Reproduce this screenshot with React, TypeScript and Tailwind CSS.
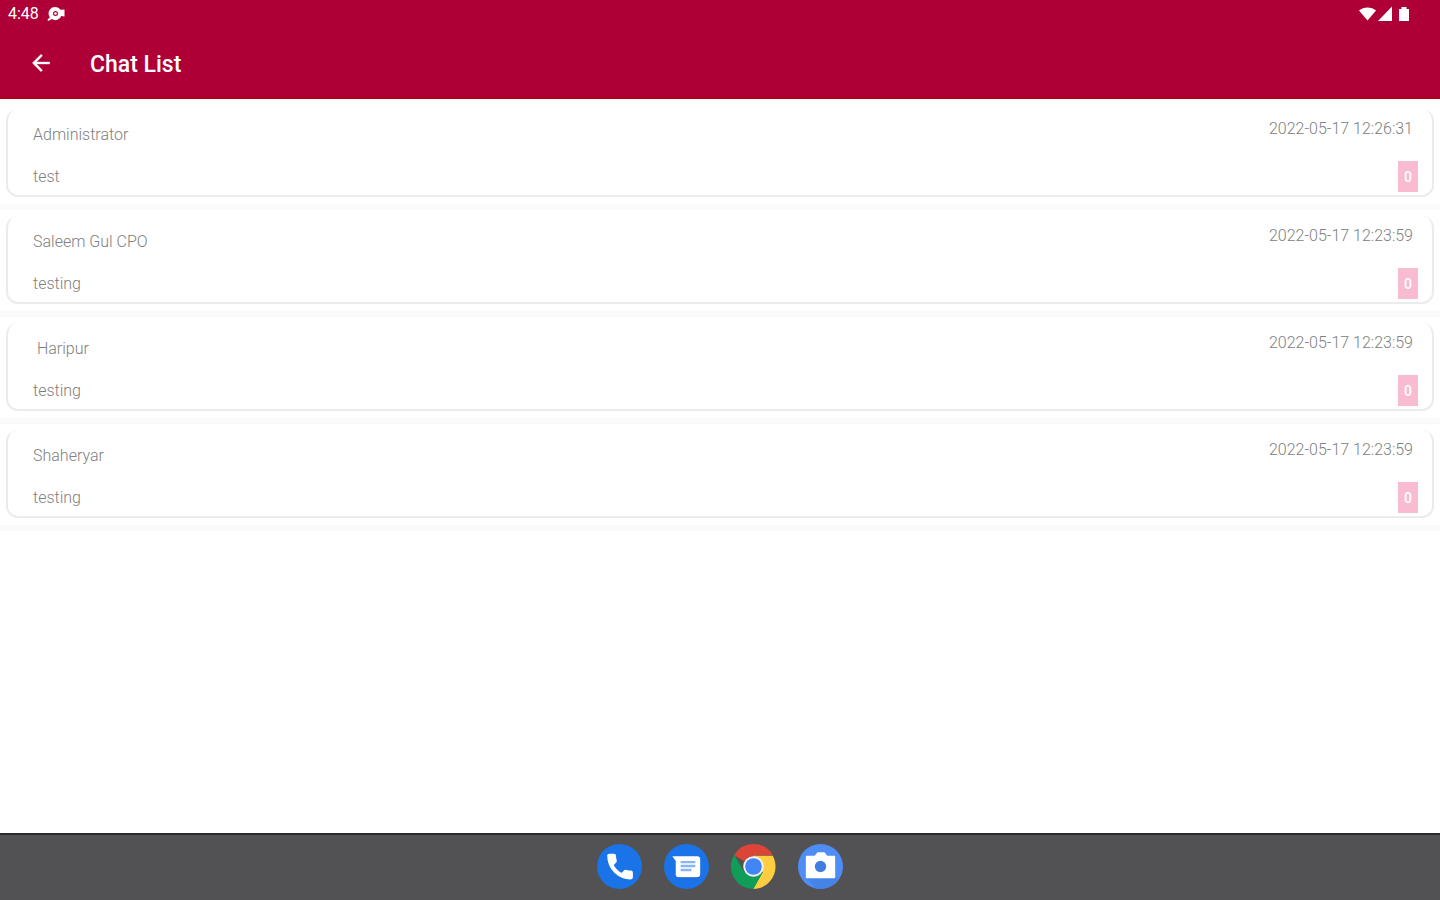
import React from 'react';

interface Chat {
  id: number;
  name: string;
  message: string;
  date: string;
  unread: number;
}

const chats: Chat[] = [
  { id: 1, name: 'Administrator', message: 'test', date: '2022-05-17 12:26:31', unread: 0 },
  { id: 2, name: 'Saleem Gul CPO', message: 'testing', date: '2022-05-17 12:23:59', unread: 0 },
  { id: 3, name: ' Haripur', message: 'testing', date: '2022-05-17 12:23:59', unread: 0 },
  { id: 4, name: 'Shaheryar', message: 'testing', date: '2022-05-17 12:23:59', unread: 0 },
];

const StatusBar: React.FC = () => (
  <div className="flex h-7 items-center justify-between pl-2 pr-7 text-white">
    <div className="flex items-center gap-2">
      <span className="text-base leading-5">4:48</span>
      <svg width="18" height="16" viewBox="0 0 18 16" fill="currentColor" aria-hidden="true">
        <path
          fillRule="evenodd"
          d="M8.500 1a6 6 0 0 1 5.100 2.800L17.500 3.500v7l-3.300-.6A6 6 0 0 1 5 13L1 15l-.5-1.500L3 11.500A6.500 6.500 0 0 1 8.500 1Zm0 4a2.500 2.500 0 1 0 0 5 2.500 2.500 0 0 0 0-5Z"
        />
        <circle cx="8.500" cy="7.500" r="1.300" />
      </svg>
    </div>
    <svg width="54" height="18" viewBox="0 0 54 18" fill="currentColor" aria-hidden="true">
      <path d="M1 5.500C5.500 1.500 13.500 1.500 18 5.500L9.500 15.500Z" />
      <path d="M34 1.500V16H20Z" />
      <path d="M41 4h2.500V2h5v2H51v12H41Z" />
    </svg>
  </div>
);

const AppBar: React.FC = () => (
  <div className="flex h-[71px] items-center gap-9 border-b-2 border-[#ab0018] pl-7 text-white">
    <button type="button" aria-label="Back" className="flex size-[26px] items-center justify-center">
      <svg width="26" height="26" viewBox="0 0 24 24" fill="currentColor" stroke="currentColor" strokeWidth="0.300">
        <path d="M20 11H7.830l5.590-5.590L12 4l-8 8 8 8 1.410-1.410L7.830 13H20v-2z" />
      </svg>
    </button>
    <h1 className="pt-1 text-[23px] leading-8 font-medium">Chat List</h1>
  </div>
);

const ChatRow: React.FC<{ chat: Chat }> = ({ chat }) => (
  <li className="border-b-6 border-[#fafafa] px-1.5 pt-1.5 pb-[7px]">
    <div className="flex h-[88px] justify-between rounded-xl border-x-2 border-b-2 border-[#ebebeb] bg-white pr-3.5 pl-[25px] text-base text-[#808080]">
      <div className="flex flex-col gap-[18px] pt-3.5 font-light whitespace-pre">
        <h2>{chat.name}</h2>
        <p>{chat.message}</p>
      </div>
      <div className="flex flex-col items-end gap-5 pt-2">
        <time className="pr-[5px] font-light">{chat.date}</time>
        <span className="flex h-[31px] w-5 items-center justify-center bg-[#f8bbd0] text-sm font-medium text-white">
          {chat.unread}
        </span>
      </div>
    </div>
  </li>
);

const PhoneIcon = () => (
  <svg width="45" height="45" viewBox="0 0 46 46" aria-hidden="true">
    <circle cx="23" cy="23" r="23" fill="#1a73e8" />
    <path
      transform="translate(7 6.500) scale(1.380)"
      fill="#fff"
      stroke="#fff"
      strokeLinejoin="round"
      d="M6.620 10.790c1.440 2.830 3.760 5.140 6.590 6.590l2.200-2.200c.27-.27.67-.36 1.020-.24 1.120.37 2.330.57 3.570.57.55 0 1 .45 1 1V20c0 .55-.45 1-1 1-9.390 0-17-7.610-17-17 0-.55.45-1 1-1h3.500c.55 0 1 .45 1 1 0 1.250.2 2.450.57 3.570.11.35.03.74-.25 1.020l-2.200 2.200z"
    />
  </svg>
);

const MessagesIcon = () => (
  <svg width="45" height="45" viewBox="0 0 46 46" aria-hidden="true">
    <circle cx="23" cy="23" r="23" fill="#1a73e8" />
    <path d="M13 31l2 4h19a3 3 0 0 0 3-3V17z" fill="#1559b7" />
    <path d="M8.500 12.500H34a3 3 0 0 1 3 3V31a3 3 0 0 1-3 3H15a3 3 0 0 1-3-3V17.500z" fill="#fff" />
    <path d="M17 18.500h15M17 22.500h15M17 26.500h11" stroke="#8ab4f8" strokeWidth="2.500" />
  </svg>
);

const ChromeIcon = () => (
  <svg width="45" height="45" viewBox="0 0 46 46" aria-hidden="true">
    <path d="M23 23L3.080 11.500A23 23 0 0 1 42.920 11.500H23z" fill="#db4437" />
    <path d="M23 12H42.700A23 23 0 0 1 22.500 46L32.530 28.500z" fill="#ffcd40" />
    <path d="M3.400 11A23 23 0 0 0 23 46L32.530 28.500L13.470 28.500z" fill="#0f9d58" />
    <path d="M23 12a11 11 0 0 1 9.530 16.500L23 23z" fill="#ffcd40" />
    <circle cx="23" cy="23" r="10.500" fill="#f1f1f1" />
    <circle cx="23" cy="23" r="8.500" fill="#4285f4" />
  </svg>
);

const CameraIcon = () => (
  <svg width="45" height="45" viewBox="0 0 46 46" aria-hidden="true">
    <circle cx="23" cy="23" r="23" fill="#4e8df5" />
    <path d="M9 34h29l2 3.500a23 23 0 0 1-22 8z" fill="#4583e6" />
    <path d="M9 12h8l3-3.500h7L30 12h7a1 1 0 0 1 1 1v21a1 1 0 0 1-1 1H9a1 1 0 0 1-1-1V13a1 1 0 0 1 1-1z" fill="#fff" />
    <circle cx="23" cy="23" r="5.800" fill="#3f7de0" />
  </svg>
);

const dockApps = [
  { label: 'Phone', Icon: PhoneIcon },
  { label: 'Messages', Icon: MessagesIcon },
  { label: 'Chrome', Icon: ChromeIcon },
  { label: 'Camera', Icon: CameraIcon },
];

export default function App() {
  return (
    <div className="flex min-h-screen flex-col bg-white font-['Roboto',sans-serif]">
      <header className="bg-[#ae0037]">
        <StatusBar />
        <AppBar />
      </header>
      <main className="flex-1 pt-1">
        <ul>
          {chats.map((chat) => (
            <ChatRow key={chat.id} chat={chat} />
          ))}
        </ul>
      </main>
      <nav
        aria-label="Dock"
        className="flex h-[67px] items-center justify-center gap-[22px] border-t-2 border-[#29292b] bg-[#525254] pb-0.5"
      >
        {dockApps.map(({ label, Icon }) => (
          <button key={label} type="button" aria-label={label}>
            <Icon />
          </button>
        ))}
      </nav>
    </div>
  );
}
